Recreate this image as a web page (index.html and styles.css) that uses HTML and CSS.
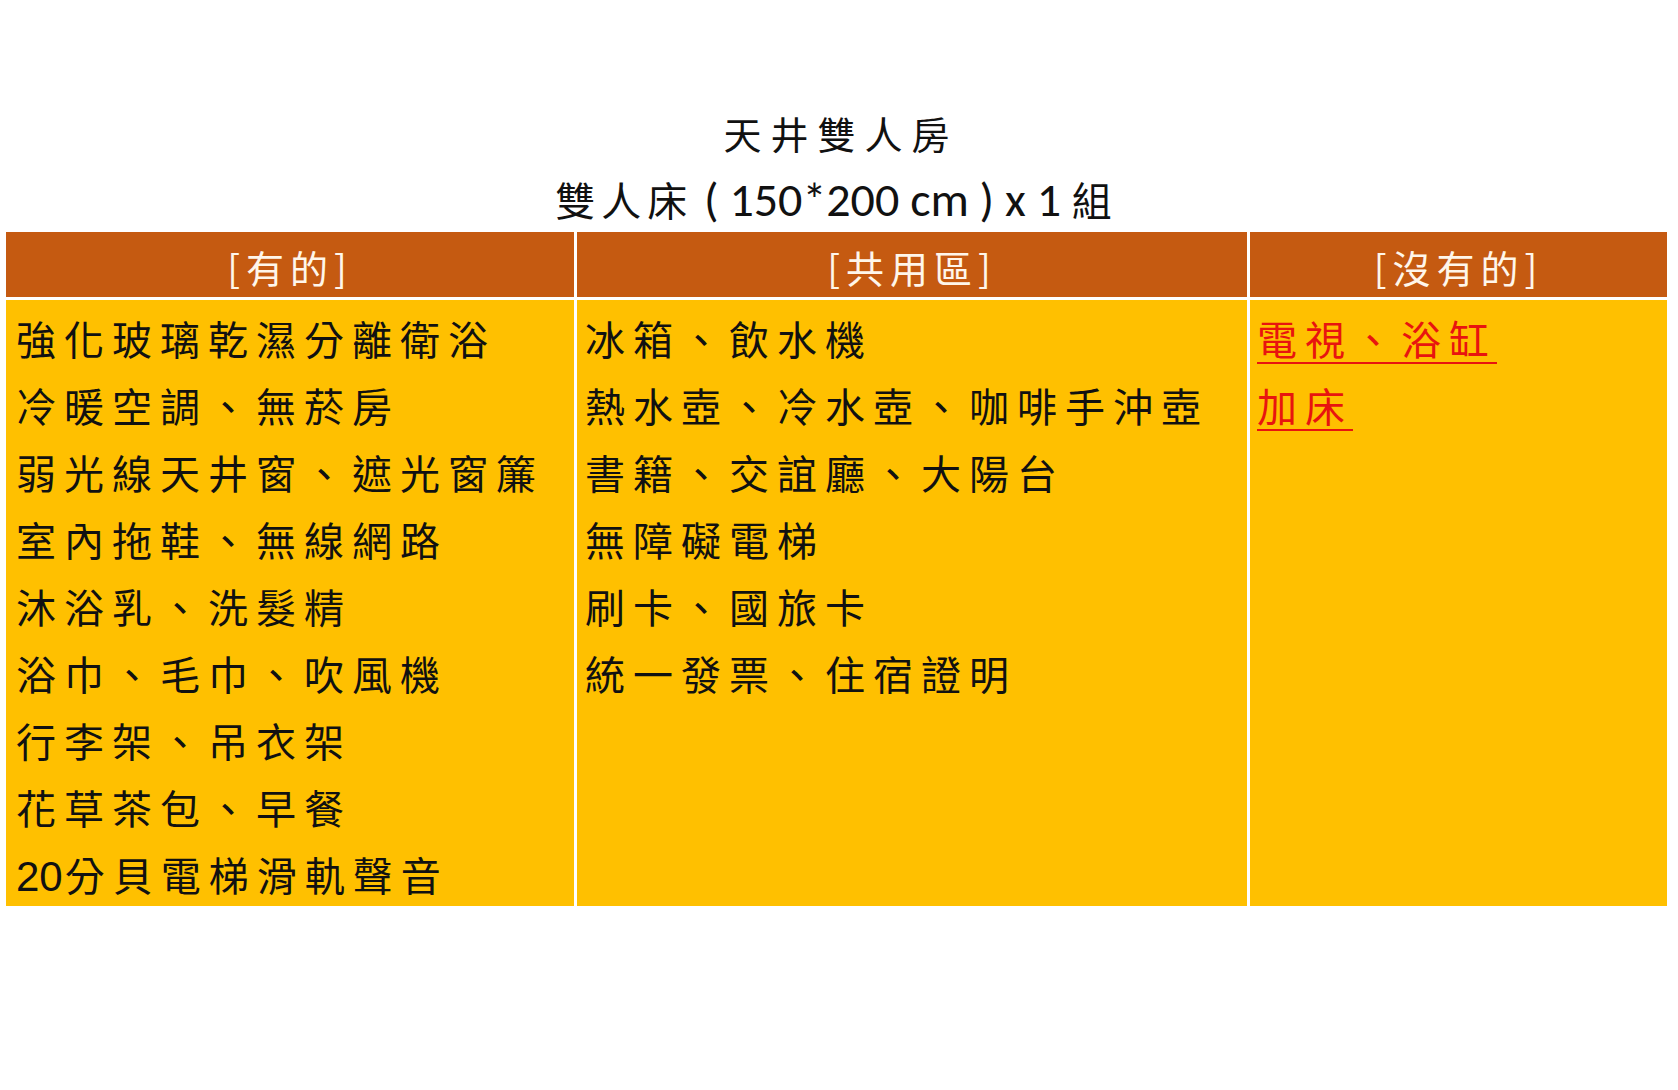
FILE: index.html
```html
<!DOCTYPE html>
<html lang="zh-Hant">
<head>
<meta charset="utf-8">
<title>天井雙人房</title>
<link rel="stylesheet" href="styles.css">
</head>
<body>
<div class="page">
  <h1 class="title">天井雙人房</h1>
  <p class="subtitle"><span class="cjk">雙人床</span> ( 150*200 cm ) x 1 <span class="cjk">組</span></p>
  <div class="table">
    <div class="head">[有的]</div>
    <div class="head">[共用區]</div>
    <div class="head">[沒有的]</div>
    <div class="cell c1">
      <div class="line">強化玻璃乾濕分離衛浴</div>
      <div class="line">冷暖空調、無菸房</div>
      <div class="line">弱光線天井窗、遮光窗簾</div>
      <div class="line">室內拖鞋、無線網路</div>
      <div class="line">沐浴乳、洗髮精</div>
      <div class="line">浴巾、毛巾、吹風機</div>
      <div class="line">行李架、吊衣架</div>
      <div class="line">花草茶包、早餐</div>
      <div class="line"><span class="num">20</span>分貝電梯滑軌聲音</div>
    </div>
    <div class="cell c2">
      <div class="line">冰箱、飲水機</div>
      <div class="line">熱水壺、冷水壺、咖啡手沖壺</div>
      <div class="line">書籍、交誼廳、大陽台</div>
      <div class="line">無障礙電梯</div>
      <div class="line">刷卡、國旅卡</div>
      <div class="line">統一發票、住宿證明</div>
    </div>
    <div class="cell c3">
      <div class="line red">電視、浴缸</div>
      <div class="line red">加床</div>
    </div>
  </div>
</div>
</body>
</html>
```
FILE: styles.css
```css
html, body {
  margin: 0;
  padding: 0;
  background: #ffffff;
}

.page {
  width: 1678px;
  height: 1090px;
  box-sizing: border-box;
  padding: 98px 11px 0 6px;
  font-family: "Noto Sans CJK TC", "Noto Sans CJK SC", sans-serif;
  color: #111111;
}

.title {
  margin: 0;
  text-align: center;
  font-size: 38px;
  font-weight: 400;
  line-height: 70px;
  height: 70px;
  letter-spacing: 9px;
  padding-left: 9px;
}

.subtitle {
  margin: 0 0 2px;
  text-align: center;
  font-family: Carlito, Lato, "Noto Sans CJK TC", sans-serif;
  font-size: 48px;
  line-height: 62px;
  height: 62px;
}

.subtitle .cjk {
  font-family: "Noto Sans CJK TC", sans-serif;
  font-size: 40px;
  letter-spacing: 6px;
}

.table {
  display: grid;
  grid-template-columns: 568px 670px 417px;
  grid-template-rows: 65px 606px;
  column-gap: 3px;
  row-gap: 3px;
  background: #ffffff;
}

.head {
  background: #c55a11;
  color: #fff6ea;
  text-align: center;
  font-size: 38px;
  line-height: 65px;
  letter-spacing: 6px;
  padding-top: 2px;
  box-sizing: border-box;
}

.cell {
  background: #ffc000;
  padding-top: 5px;
  box-sizing: border-box;
}

.c1 { padding-left: 10px; }
.c2 { padding-left: 8px; }
.c3 { padding-left: 7px; }

.line {
  font-size: 40px;
  line-height: 67px;
  letter-spacing: 8px;
  white-space: nowrap;
  color: #111111;
}

.num {
  font-family: "Liberation Sans Narrow", "Liberation Sans", sans-serif;
  letter-spacing: 0;
  font-size: 42px;
  margin-right: 2px;
}

.red {
  color: #e8140f;
}

.c3 .line.red {
  display: table;
  text-decoration: underline;
  text-decoration-thickness: 2px;
  text-underline-offset: 7px;
}
```
